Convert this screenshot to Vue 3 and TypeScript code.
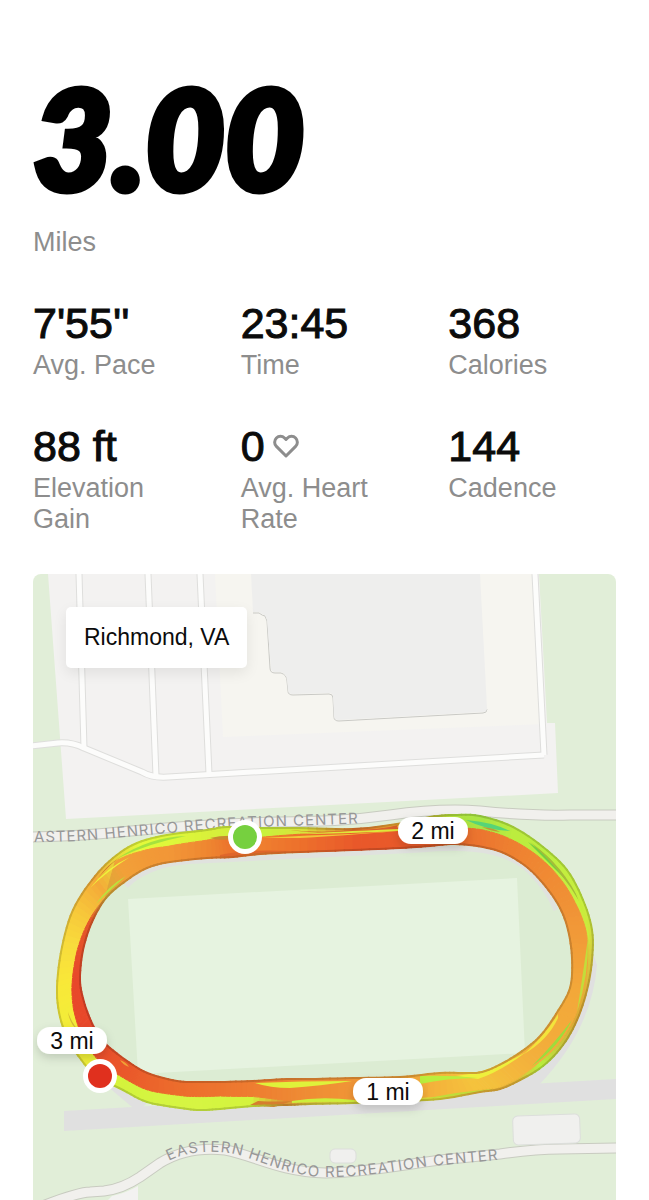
<script setup lang="ts">
type Point = [number, number]
type Rgb = [number, number, number]

interface Stat {
  value: string
  label: string
  heart?: boolean
}

interface Station {
  outer: Point
  inner: Point
  split: number
  outerColor: Rgb
  innerColor: Rgb
}

interface Shape {
  d: string
  color: string
}

const stats: Stat[] = [
  { value: "7'55''", label: 'Avg. Pace' },
  { value: '23:45', label: 'Time' },
  { value: '368', label: 'Calories' },
  { value: '88 ft', label: 'Elevation Gain' },
  { value: '0', label: 'Avg. Heart Rate', heart: true },
  { value: '144', label: 'Cadence' },
]

const mileMarkers = [
  { text: '2 mi', x: 433, y: 831 },
  { text: '1 mi', x: 388, y: 1092 },
  { text: '3 mi', x: 72, y: 1041 },
]

const endpoints = [
  { x: 245, y: 837, color: '#76d03f' },
  { x: 100, y: 1076, color: '#e0301e' },
]

function rgb(hex: string): Rgb {
  const n = parseInt(hex, 16)
  return [(n >> 16) & 255, (n >> 8) & 255, n & 255]
}

// Each row: outer edge, inner edge, share of the outer band, outer and inner pace colour.
const rows: [number, number, number, number, number, string, string][] = [
  [57, 987, 80, 980, 0.66, 'f9e838', 'e8482a'],
  [62, 947, 83, 950, 0.74, 'f8dc3c', 'e6502a'],
  [73, 910, 92, 922, 0.85, 'f7c73a', 'e35a2a'],
  [92, 880, 106, 898, 0.98, 'f4aa38', 'd8a838'],
  [113, 858, 127, 880, 0.16, 'e9d838', 'f2a038'],
  [137, 843, 147, 868, 0.34, 'e4f93a', 'f29a37'],
  [167, 835, 170, 862, 0.42, 'def83a', 'f29637'],
  [207, 830, 207, 858, 0.36, 'd8f03a', 'ee8530'],
  [227, 827, 233, 857, 0.34, 'd2f03c', 'ec722c'],
  [260, 828, 260, 854, 0.36, 'c8f23c', 'ef7e2f'],
  [300, 828, 300, 852, 0.26, 'd8e33a', 'ed6f2b'],
  [353, 829, 353, 850, 0.14, 'e5762c', 'e9582a'],
  [397, 824, 400, 848, 0.16, 'eab032', 'e9592a'],
  [430, 817, 430, 846, 0.3, 'c8c838', 'e9602a'],
  [453, 815, 455, 844, 0.46, 'b4e63e', 'ea6c2c'],
  [480, 816, 483, 847, 0.44, 'a8e544', 'ec762f'],
  [513, 827, 506, 854, 0.44, 'bcec3e', 'ee7f30'],
  [543, 847, 528, 868, 0.4, 'bcee3e', 'ef8632'],
  [567, 870, 546, 887, 0.4, 'c4ee3e', 'f08c34'],
  [583, 900, 560, 908, 0.34, 'c8ef3e', 'f09236'],
  [592, 930, 568, 930, 0.26, 'd0e23c', 'f19938'],
  [592, 960, 572, 958, 0.22, 'd8c83a', 'f2a038'],
  [587, 990, 570, 988, 0.2, 'e0b036', 'f3a839'],
  [577, 1020, 556, 1014, 0.16, 'dca834', 'f3aa3a'],
  [563, 1045, 541, 1035, 0.18, 'c8c83a', 'f3ac3a'],
  [543, 1066, 525, 1049, 0.22, 'b8ee3c', 'f3b03c'],
  [520, 1080, 503, 1063, 0.12, 'e4b838', 'f4b83c'],
  [500, 1089, 482, 1072, 0.1, 'e8b038', 'f4c03c'],
  [480, 1092, 465, 1073, 0.12, 'e8b838', 'f5c23c'],
  [440, 1099, 440, 1073, 0.12, 'e0d838', 'f4b43b'],
  [400, 1101, 400, 1077, 0.12, 'd8d83a', 'f2a038'],
  [353, 1103, 353, 1078, 0.14, 'd8d83a', 'f09436'],
  [310, 1104, 310, 1079, 0.2, 'd8c43a', 'ef8c34'],
  [287, 1105, 287, 1079, 0.16, 'dc9434', 'ee8633'],
  [253, 1106, 253, 1081, 0.38, 'd4f33c', 'ee7c30'],
  [220, 1109, 220, 1082, 0.48, 'd4f540', 'ed742e'],
  [200, 1110, 195, 1082, 0.48, 'd6f542', 'ed702d'],
  [180, 1108, 177, 1081, 0.47, 'd6f542', 'ec6c2c'],
  [147, 1102, 150, 1074, 0.42, 'd4f540', 'eb622b'],
  [123, 1090, 133, 1065, 0.4, 'd4f33c', 'ea582a'],
  [100, 1078, 110, 1048, 0.42, 'e2f23a', 'e9502a'],
  [87, 1067, 99, 1036, 0.45, 'eeee38', 'e84c2a'],
  [70, 1043, 91, 1021, 0.5, 'f2ec38', 'e8482a'],
  [60, 1017, 84, 1002, 0.56, 'f4ec38', 'e8482a'],
]

const stations: Station[] = rows.map(([ox, oy, ix, iy, split, a, b]) => ({
  outer: [ox, oy],
  inner: [ix, iy],
  split,
  outerColor: rgb(a),
  innerColor: rgb(b),
}))

function spline(a: number, b: number, c: number, d: number, t: number): number {
  return 0.5 * (2 * b + (c - a) * t + (2 * a - 5 * b + 4 * c - d) * t * t + (3 * b - a - 3 * c + d) * t * t * t)
}

const mix = (a: number, b: number, t: number): number => a + (b - a) * t
const mixPoint = (a: Point, b: Point, t: number): Point => [mix(a[0], b[0], t), mix(a[1], b[1], t)]
const mixColor = (a: Rgb, b: Rgb, t: number): Rgb => [mix(a[0], b[0], t), mix(a[1], b[1], t), mix(a[2], b[2], t)]
const css = (c: Rgb, shade = 1): string => `rgb(${c.map((v) => Math.round(v * shade)).join(',')})`
const at = (p: Point): string => `${p[0].toFixed(1)} ${p[1].toFixed(1)}`

const STEPS = 6
const samples: Station[] = []
const count = stations.length
for (let i = 0; i < count; i++) {
  const [p, q, r, s] = [-1, 0, 1, 2].map((k) => stations[(i + k + count) % count])
  for (let k = 0; k < STEPS; k++) {
    const t = k / STEPS
    const curve = (key: 'outer' | 'inner'): Point => [
      spline(p[key][0], q[key][0], r[key][0], s[key][0], t),
      spline(p[key][1], q[key][1], r[key][1], s[key][1], t),
    ]
    samples.push({
      outer: curve('outer'),
      inner: curve('inner'),
      split: mix(q.split, r.split, t),
      outerColor: mixColor(q.outerColor, r.outerColor, t),
      innerColor: mixColor(q.innerColor, r.innerColor, t),
    })
  }
}

const bands: Shape[] = []
const edges: Shape[] = []
samples.forEach((a, i) => {
  const b = samples[(i + 1) % samples.length]
  const am = mixPoint(a.outer, a.inner, a.split)
  const bm = mixPoint(b.outer, b.inner, b.split)
  bands.push({ d: `M${at(a.outer)}L${at(b.outer)}L${at(bm)}L${at(am)}Z`, color: css(a.outerColor) })
  bands.push({ d: `M${at(am)}L${at(bm)}L${at(b.inner)}L${at(a.inner)}Z`, color: css(a.innerColor) })
  edges.push({ d: `M${at(a.outer)}L${at(b.outer)}`, color: css(a.outerColor, 0.84) })
  edges.push({ d: `M${at(a.inner)}L${at(b.inner)}`, color: css(a.innerColor, 0.84) })
})

const infield = 'M' + samples.map((s) => at(s.inner)).join('L') + 'Z'

const streaks: Shape[] = [
  { d: 'M98 878Q112 862 122 856Q108 864 98 878Z', color: '#c8682c' },
  { d: 'M90 888Q106 868 130 857Q106 872 90 888Z', color: '#eef43a' },
  { d: 'M118 858Q150 837 186 836Q150 843 118 858Z', color: '#a5e23e' },
  { d: 'M96 904Q108 886 126 876Q110 890 96 904Z', color: '#bde03c' },
  { d: 'M210 838Q222 835 238 836L230 839Q218 841 210 838Z', color: '#c98a30' },
  { d: 'M220 855Q245 849 290 851L270 854L220 858Z', color: '#df662b' },
  { d: 'M280 829Q320 834 352 830Q380 830 398 825L396 829Q340 837 280 829Z', color: '#d7602a' },
  { d: 'M262 838Q310 835 350 834L398 831Q340 836 300 838Z', color: '#f2c638' },
  { d: 'M300 834Q330 832 398 829L398 831Q340 834 300 834Z', color: '#dfe63a' },
  { d: 'M466 820Q492 822 510 831Q486 830 466 820Z', color: '#57d477' },
  { d: 'M482 827Q494 828 500 832Q490 831 482 827Z', color: '#c09a34' },
  { d: 'M528 842Q552 856 566 880Q550 864 528 842Z', color: '#73cf43' },
  { d: 'M530 842Q564 866 581 904Q560 868 530 842Z', color: '#a5bd38' },
  { d: 'M574 888Q588 912 590 945Q584 914 574 888Z', color: '#c8ec3c' },
  { d: 'M588 938Q589 975 577 1012Q582 980 588 938Z', color: '#c3dc3a' },
  { d: 'M558 1018Q548 1040 524 1054Q546 1034 558 1014Z', color: '#f2e43c' },
  { d: 'M572 1020Q558 1048 532 1066Q552 1046 572 1020Z', color: '#9ddc3c' },
  { d: 'M526 1052Q500 1072 478 1079L456 1076Q492 1072 526 1052Z', color: '#eef03c' },
  { d: 'M420 1076Q450 1075 478 1078Q446 1078 420 1084Z', color: '#b9ee3c' },
  { d: 'M424 1099Q462 1091 494 1089Q462 1096 424 1099Z', color: '#c0dc3a' },
  { d: 'M255 1083Q300 1081 352 1081Q320 1086 290 1088Q270 1088 255 1083Z', color: '#dff23a' },
  { d: 'M292 1101Q320 1096 354 1100L354 1102Q320 1101 292 1103Z', color: '#cdee3b' },
  { d: 'M258 1101Q276 1102 292 1101L274 1107L250 1105Z', color: '#d67e2e' },
  { d: 'M120 1060Q126 1062 129 1067Q123 1065 120 1060Z', color: '#efa236' },
  { d: 'M68 1012Q72 1024 80 1032Q70 1026 68 1012Z', color: '#d4b834' },
]
</script>

<template>
  <main class="run">
    <header class="summary">
      <h1 class="distance">3.00</h1>
      <p class="label">Miles</p>
    </header>

    <dl class="stats">
      <div v-for="stat in stats" :key="stat.label" class="stat">
        <dt class="label">{{ stat.label }}</dt>
        <dd class="value">
          {{ stat.value }}
          <svg v-if="stat.heart" class="heart" viewBox="0 0 26 24" aria-hidden="true">
            <path d="M13 22 3.4 12.4A5.9 5.9 0 0 1 3.4 4a5.7 5.7 0 0 1 8.1 0L13 5.5 14.5 4a5.7 5.7 0 0 1 8.1 0 5.9 5.9 0 0 1 0 8.4Z" />
          </svg>
        </dd>
      </div>
    </dl>

    <section class="map" aria-label="Route map">
      <svg class="canvas" viewBox="33 574 583 626">
        <defs>
          <filter id="shadow" x="-30%" y="-50%" width="160%" height="220%">
            <feDropShadow dx="0" dy="4" stdDeviation="5" flood-color="#000" flood-opacity="0.15" />
          </filter>
          <path id="north-label" d="M34 842Q70 842 105 839Q145 835 180 832Q235 827 290 826L400 822" />
          <path id="south-label" d="M169 1161C187 1151 217 1149 242 1156C267 1163 292 1177 327 1177C377 1177 412 1167 442 1165L530 1157" />
        </defs>

        <rect class="park" x="33" y="574" width="583" height="626" />
        <path class="lot" d="M48 574L66 819L558 793L555 723L547 723L539 574Z" />
        <path class="yard" d="M215 574L223 737L545 724L538 574Z" />
        <path class="building-edge" d="M253 613L259 613Q263 616 265 616L267 621L270 668Q270 673 275 673L281 673Q287 675 287 681L288 691Q288 695 293 695L329 694Q333 694 333 698L334 717Q334 721 339 721L483 713Q487 713 487 709" />
        <path class="building" d="M251 574L253 612L259 612Q263 615 265 615L267 620L271 668Q271 672 275 672L281 672Q287 674 287 680L288 690Q288 694 293 694L329 693Q333 693 333 697L334 716Q334 720 339 720L483 712Q487 712 487 708L480 574Z" />

        <g class="lane-edge">
          <path d="M79 574L84 748M148 574L156 776M200 574L209 774M535 574L544 755" />
          <path d="M30 746L58 743Q72 742 84 748L142 772Q152 778 168 777L544 755" />
        </g>
        <g class="lane">
          <path d="M79 574L84 748M148 574L156 776M200 574L209 774M535 574L544 755" />
          <path d="M30 746L58 743Q72 742 84 748L142 772Q152 778 168 777L544 755" />
        </g>

        <g v-for="kind in ['road-edge', 'road']" :key="kind" :class="kind">
          <path d="M30 837Q80 836 120 832Q200 824 280 822Q340 822 390 815Q440 808 480 811Q530 816 570 815L620 815" />
          <path d="M40 1207Q78 1192 90 1192L104 1191Q122 1189 140 1177L160 1163Q188 1146 225 1150C250 1154 280 1172 325 1173C370 1173 420 1161 460 1158L500 1154Q535 1149 560 1149L620 1148" />
        </g>
        <path class="lot" d="M112 1196Q126 1193 138 1186L138 1200L108 1200Z" />

        <path class="track" d="M64 1111L616 1079L616 1099L64 1131Z" />
        <path class="track" d="M100 1080L138 1112L150 1100L115 1078Z" />
        <path class="track" d="M592 950L597 965Q592 1030 538 1086L500 1088Q580 1040 592 950Z" />
        <path class="infield" :d="infield" />
        <path class="track-bend" d="M126 886Q150 862 200 861L420 850Q500 842 530 872Q548 890 556 910" />
        <path class="field" d="M128 899L517 878L525 1053L138 1074Z" />
        <rect class="hut" x="513" y="1115" width="67" height="29" rx="5" transform="rotate(-2 546 1129)" />
        <rect class="hut" x="330" y="1149" width="26" height="14" rx="5" />

        <g class="road-name">
          <text><textPath href="#north-label">ASTERN HENRICO RECREATION CENTER</textPath></text>
          <text><textPath href="#south-label">EASTERN HENRICO RECREATION CENTER</textPath></text>
        </g>

        <path v-for="(band, i) in bands" :key="`band-${i}`" class="band" :d="band.d" :fill="band.color" :stroke="band.color" />
        <path v-for="(streak, i) in streaks" :key="`streak-${i}`" :d="streak.d" :fill="streak.color" />
        <path v-for="(edge, i) in edges" :key="`edge-${i}`" class="edge" :d="edge.d" :stroke="edge.color" />

        <g v-for="marker in mileMarkers" :key="marker.text">
          <rect class="pill" :x="marker.x - 35" :y="marker.y - 14" width="70" height="27" rx="13" filter="url(#shadow)" />
          <text class="mile" :x="marker.x" :y="marker.y + 8">{{ marker.text }}</text>
        </g>
        <g v-for="end in endpoints" :key="end.color">
          <circle :cx="end.x" :cy="end.y" r="17" fill="#fff" />
          <circle :cx="end.x" :cy="end.y" r="12" :fill="end.color" />
        </g>
      </svg>
      <p class="place">Richmond, VA</p>
    </section>
  </main>
</template>

<style>
body {
  margin: 0;
  background: #fff;
}
</style>

<style scoped>
.run {
  box-sizing: border-box;
  padding: 80px 33px 0;
  color: #0b0b0b;
  font-family: "Liberation Sans", Arial, sans-serif;
}

.distance {
  margin: 0;
  color: #000;
  font: italic 900 137px/114px Lato, sans-serif;
  -webkit-text-stroke: 7px #000;
}

.label {
  margin: 0;
  color: #8d8d8d;
  font-size: 27px;
  line-height: 31px;
}

.summary .label {
  margin-top: 33px;
}

.stats {
  display: grid;
  grid-template-columns: repeat(3, 1fr);
  gap: 40px;
  margin: 40px 0 39px;
}

.stat {
  display: flex;
  flex-direction: column-reverse;
  justify-content: flex-end;
  gap: 2px;
}

.value {
  display: flex;
  align-items: center;
  gap: 8px;
  margin: 0;
  font-size: 43px;
  line-height: 50px;
  -webkit-text-stroke: 1px #0b0b0b;
}

.heart {
  width: 26px;
  height: 24px;
  fill: none;
  stroke: #8d8d8d;
  stroke-width: 3;
  stroke-linejoin: round;
}

.map {
  position: relative;
  overflow: hidden;
  border-radius: 8px 8px 0 0;
}

.canvas {
  display: block;
  width: 100%;
  height: auto;
}

.place {
  position: absolute;
  top: 33px;
  left: 33px;
  margin: 0;
  padding: 15px 18px;
  border-radius: 5px;
  background: #fff;
  box-shadow: 0 5px 14px rgba(0, 0, 0, 0.08);
  color: #0b0b0b;
  font-size: 23px;
  line-height: 31px;
}

.park { fill: #e1eed8; }
.lot { fill: #f3f2f1; }
.yard { fill: #f6f5f0; }
.building { fill: #eeeeed; }
.building-edge { fill: none; stroke: #c9c9c5; stroke-width: 1; }

.lane-edge,
.lane,
.road-edge,
.road {
  fill: none;
  stroke-linejoin: round;
}

.lane-edge { stroke: #dededc; stroke-width: 7; }
.lane { stroke: #fcfcfb; stroke-width: 5; }
.road-edge { stroke: #c8cbc0; stroke-width: 11; }
.road { stroke: #f1f0ed; stroke-width: 9; }

.track { fill: #e0e0e0; }
.track-bend { fill: none; stroke: #e0e2de; stroke-width: 5; }
.infield { fill: #dcecd3; }
.field { fill: #e6f3e0; }
.hut { fill: #f0f0ee; stroke: #dcdedb; stroke-width: 1; }

.road-name {
  fill: #979797;
  font-family: Inter, sans-serif;
  font-size: 15px;
  letter-spacing: 1px;
}

.band { stroke-width: 1; }
.edge { fill: none; stroke-width: 2; stroke-linecap: round; }
.pill { fill: #fff; }

.mile {
  fill: #0b0b0b;
  font-size: 23px;
  text-anchor: middle;
}
</style>
